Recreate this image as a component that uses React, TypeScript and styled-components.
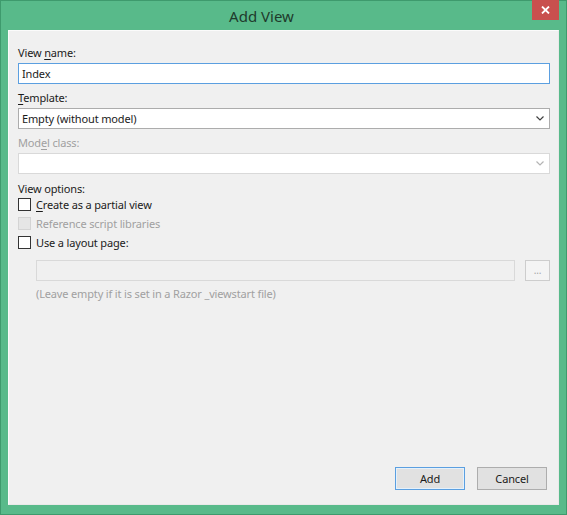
import React from 'react'
import styled, { createGlobalStyle } from 'styled-components'

const GlobalStyle = createGlobalStyle`
  html, body {
    margin: 0;
    padding: 0;
    background: #5aba8b;
  }
  body {
    font-family: "Noto Sans", "Open Sans", sans-serif;
    font-size: 11px;
    letter-spacing: -0.15px;
    color: #1b1b1b;
  }
`

const Window = styled.div`
  width: 567px;
  height: 515px;
  box-sizing: border-box;
  background: #58ba8a;
  border: 1px solid #3e9a6d;
  display: flex;
  flex-direction: column;
`

const TitleBar = styled.div`
  height: 29px;
  flex: none;
  position: relative;
  display: flex;
  align-items: center;
  justify-content: center;
  padding-right: 44px;
`

const Title = styled.span`
  font-size: 15px;
  color: #1f3a2c;
  letter-spacing: 0;
`

const CloseButton = styled.div`
  position: absolute;
  top: -1px;
  right: 7px;
  width: 27px;
  height: 20px;
  background: #c9504e;
  display: flex;
  align-items: center;
  justify-content: center;
`

const Client = styled.div`
  flex: 1;
  margin: 0 7px 9px 7px;
  background: #f0f0f0;
  border: 1px solid;
  border-color: #fbfbfb #e9e9e9 #e9e9e9 #fbfbfb;
  padding: 14px 8px 14px 9px;
  display: flex;
  flex-direction: column;
`

const Label = styled.div<{ $disabled?: boolean; $gap?: number; $after?: number }>`
  height: 15px;
  line-height: 15px;
  color: ${({ $disabled }) => ($disabled ? '#a0a0a0' : '#1b1b1b')};
  margin-top: ${({ $gap }) => $gap ?? 0}px;
  margin-bottom: ${({ $after }) => $after ?? 3}px;
  u {
    text-decoration: underline;
    text-underline-offset: 2px;
  }
`

const TextBox = styled.div<{ $focused?: boolean; $disabled?: boolean; $grow?: boolean }>`
  height: 21px;
  box-sizing: border-box;
  border: 1px solid
    ${({ $focused, $disabled }) => ($focused ? '#5b9fe0' : $disabled ? '#d9d9d9' : '#acacac')};
  background: ${({ $disabled }) => ($disabled ? '#f0f0f0' : '#ffffff')};
  display: flex;
  align-items: center;
  padding-left: 3px;
  flex: ${({ $grow }) => ($grow ? '1' : 'none')};
`

const ComboBox = styled(TextBox)<{ $inactive?: boolean }>`
  justify-content: space-between;
  padding-right: 5px;
  border-color: ${({ $inactive }) => ($inactive ? '#d9d9d9' : '#acacac')};
`

const Options = styled.div`
  display: flex;
  flex-direction: column;
`

const CheckRow = styled.label<{ $disabled?: boolean }>`
  height: 19px;
  display: flex;
  align-items: center;
  gap: 5px;
  color: ${({ $disabled }) => ($disabled ? '#a0a0a0' : '#1b1b1b')};
  u {
    text-underline-offset: 2px;
  }
`

const CheckBox = styled.span<{ $disabled?: boolean }>`
  width: 13px;
  height: 13px;
  box-sizing: border-box;
  border: 1px solid ${({ $disabled }) => ($disabled ? '#d4d4d4' : '#333333')};
  background: ${({ $disabled }) => ($disabled ? '#e6e6e6' : '#ffffff')};
`

const LayoutRow = styled.div`
  display: flex;
  gap: 10px;
  margin: 8px 0 0 18px;
`

const BrowseButton = styled.div`
  width: 25px;
  height: 21px;
  box-sizing: border-box;
  border: 1px solid #cdcdcd;
  background: #f4f4f4;
  color: #a6a6a6;
  font-size: 10px;
  display: flex;
  align-items: center;
  justify-content: center;
  padding-bottom: 2px;
`

const Hint = styled.div`
  color: #a0a0a0;
  margin: 5px 0 0 18px;
  line-height: 15px;
`

const Footer = styled.div`
  margin-top: auto;
  display: flex;
  justify-content: flex-end;
  gap: 12px;
  padding-right: 3px;
`

const Button = styled.div<{ $default?: boolean }>`
  width: 70px;
  height: 23px;
  box-sizing: border-box;
  background: #e1e1e1;
  border: 1px solid ${({ $default }) => ($default ? '#5b9fe0' : '#adadad')};
  box-shadow: ${({ $default }) => ($default ? 'inset 0 0 0 1px #e5f1fb' : 'none')};
  display: flex;
  align-items: center;
  justify-content: center;
  color: #1b1b1b;
`

function Chevron({ color }: { color: string }) {
  return (
    <svg width="8" height="5" viewBox="0 0 8 5">
      <path d="M0.5 0.5 L4 4 L7.5 0.5" fill="none" stroke={color} strokeWidth="1.2" />
    </svg>
  )
}

export default function App() {
  return (
    <>
      <GlobalStyle />
      <Window>
        <TitleBar>
          <Title>Add View</Title>
          <CloseButton>
            <svg width="9" height="8" viewBox="0 0 9 8">
              <path d="M1 0.5 L8 7.5 M8 0.5 L1 7.5" stroke="#ffffff" strokeWidth="1.8" />
            </svg>
          </CloseButton>
        </TitleBar>
        <Client>
          <Label>
            View <u>n</u>ame:
          </Label>
          <TextBox $focused>Index</TextBox>

          <Label $gap={6}>
            <u>T</u>emplate:
          </Label>
          <ComboBox>
            Empty (without model)
            <Chevron color="#404040" />
          </ComboBox>

          <Label $gap={6} $disabled>
            Mod<u>e</u>l class:
          </Label>
          <ComboBox $inactive>
            <span />
            <Chevron color="#b4b4b4" />
          </ComboBox>

          <Label $gap={7} $after={-1}>
            View options:
          </Label>
          <Options>
            <CheckRow>
              <CheckBox />
              <span>
                <u>C</u>reate as a partial view
              </span>
            </CheckRow>
            <CheckRow $disabled>
              <CheckBox $disabled />
              <span>Reference script libraries</span>
            </CheckRow>
            <CheckRow>
              <CheckBox />
              <span>Use a layout page:</span>
            </CheckRow>
          </Options>
          <LayoutRow>
            <TextBox $disabled $grow />
            <BrowseButton>...</BrowseButton>
          </LayoutRow>
          <Hint>(Leave empty if it is set in a Razor _viewstart file)</Hint>

          <Footer>
            <Button $default>Add</Button>
            <Button>Cancel</Button>
          </Footer>
        </Client>
      </Window>
    </>
  )
}
